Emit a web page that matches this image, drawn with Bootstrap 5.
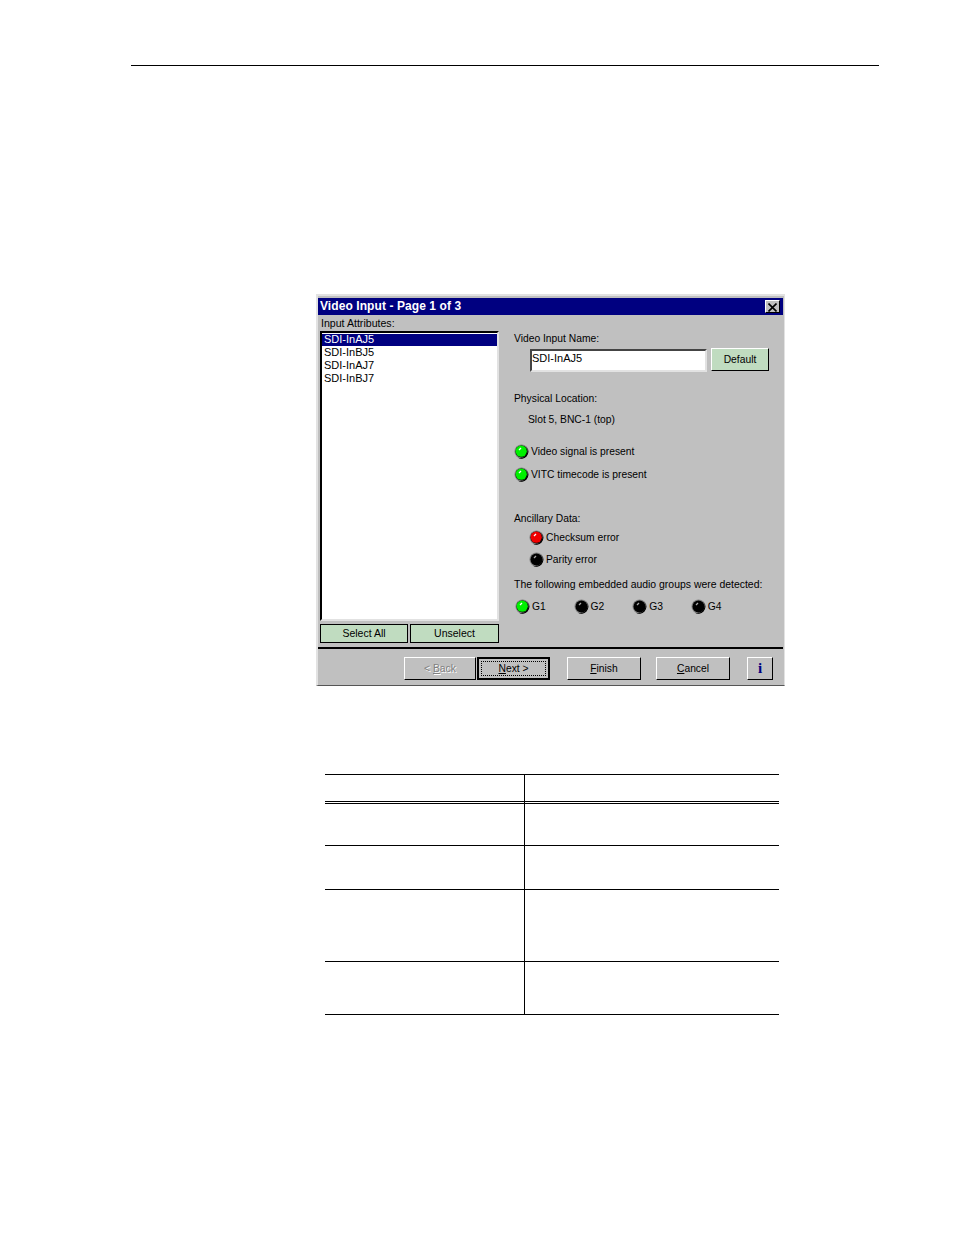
<!DOCTYPE html>
<html lang="en">
<head>
<meta charset="utf-8">
<title>Video Input</title>
<link href="https://cdn.jsdelivr.net/npm/bootstrap@5.3.0/dist/css/bootstrap.min.css" rel="stylesheet">
<style>
html,body{background:#fff;margin:0}
body{font-family:"Liberation Sans",Arial,sans-serif;font-size:11px;line-height:13px;color:#000;height:1235px;overflow:hidden}
.sheet{padding:65px 75px 0 131px}
.head-rule{height:1px;background:#000;margin-bottom:228px}
.dlg{box-sizing:border-box;width:469px;height:392px;margin-left:185px;background:#c0c0c0;border-style:solid;border-width:2px 1px 1px 2px;border-color:#e2e2e2 #e2e2e2 #555 #e2e2e2;padding-top:2px}
.ttl{height:17px;width:465px;background:#000080;color:#fff;font-weight:700;font-size:12px;letter-spacing:.08px;padding:0 3px 0 2px}
.xbtn{width:15px;height:13px;background:#c0c0c0;border:1px solid;border-color:#fff #000 #000 #fff;padding:0;line-height:0}
.xbtn svg{display:block;margin:1px 0 0 2px}
.panes{height:332px}
.leftp{width:180px;margin-left:2px}
.lbl{margin:2px 0 1px 1px;height:13px;white-space:nowrap;font-size:10.6px}
.lbox{width:179px;height:290px;background:#fff;border:2px solid;border-color:#000 #e2e2e2 #e2e2e2 #000;border-radius:0;padding:1px 0 0}
.lbox .list-group-item{border:0;border-radius:0;padding:0 0 0 2px;height:12px;margin-bottom:1px;line-height:11px;font-size:11px;background:transparent;color:#000}
.lbox .list-group-item.active{background:#000080;color:#fff}
.duo{margin-top:3px;gap:2px}
.gbtn{background:#c0dcc0;border:1px solid #000;border-radius:0;font-size:10.5px;line-height:13px;color:#000;padding:0;height:19px}
.gbtn.one{width:88px}.gbtn.two{width:89px}
.rightp{margin-left:14px;width:260px;font-size:10.3px}
.vname{margin-top:17px;height:13px}
.namerow{margin-top:3px;margin-left:16px;gap:4px;height:23px}
.nameinp{box-sizing:border-box;width:177px;height:23px;margin-top:1px;border:2px solid;border-color:#444 #e2e2e2 #e2e2e2 #444;background:#fff;padding:0 0 6px 0;font-size:11px;line-height:13px;border-radius:0;color:#000;box-shadow:none}
.defbtn{box-sizing:border-box;width:58px;height:23px;background:#c0dcc0;border:1px solid;border-color:#fff #000 #000 #fff;border-radius:0;font-size:10.3px;line-height:13px;color:#000;padding:0}
.loc1{margin-top:21px}
.loc2{margin-top:8px;margin-left:14px}
.led{flex:none;display:block}
.ledrow{gap:2px;height:15px;align-items:center}
.r1{margin-top:18px}.r2{margin-top:8px}
.anc{margin-top:30px}
.sub{margin-left:15px}
.r3{margin-top:5px}.r4{margin-top:7px}
.det{margin-top:11px;white-space:nowrap;font-size:10.45px}
.grow{margin-top:8px;margin-left:1px;width:240px}
.gcell{width:58.6px}
.gcell .lt{margin-left:2px}
.rule2{height:2px;background:#000;width:465px;margin-top:0}
.foot{width:465px;height:37px;padding-top:8px;padding-left:86px}
.wbtn{box-sizing:border-box;height:23px;width:74px;background:#c0c0c0;border:1px solid;border-color:#fff #000 #000 #fff;border-radius:0;font-size:10.3px;line-height:13px;color:#000;padding:0}
.wbtn.dis,.wbtn.dis:disabled{opacity:1;color:#808080;text-shadow:1px 1px 0 #fff;width:72px;background:#c0c0c0;border-color:#fff #000 #000 #fff}
.wbtn.foc{border:2px solid #000;width:73px;margin-left:1px;padding:2px}
.wbtn.foc span{display:block;border:1px dotted #000;height:15px;line-height:13px}
.wbtn.fin{margin-left:17px}
.wbtn.can{margin-left:15px}
.wbtn.inf{width:26px;margin-left:17px;color:#000080;font-family:"Liberation Serif",serif;font-weight:700;font-size:15px}
.ptab{width:454px;margin:88px 0 0 194px;border-collapse:collapse;table-layout:fixed}
.ptab td,.ptab th{padding:0;border:0;border-bottom:1px solid #000;background:#fff}
.ptab tr:first-child td{border-top:1px solid #000}
.ptab td:first-child{width:199px;border-right:1px solid #000}
.h0{height:27px}.h1{height:42px}.h2{height:44px}.h3{height:72px}.h4{height:53px}
.ptab .rh{height:2px;line-height:0;font-size:0}
</style>
</head>
<body>
<svg width="0" height="0" class="position-absolute">
<defs>
<g id="ledbase">
<circle cx="7.5" cy="7.5" r="7" fill="#808080"/>
<path d="M13 3.5A7 7 0 0 1 3.5 13.5 7.5 7.5 0 0 0 13 3.5Z" fill="#000"/>
<circle cx="7.5" cy="7.5" r="6" fill="#000"/>
</g>
<symbol id="lg" viewBox="0 0 15 15"><use href="#ledbase"/><circle cx="7.2" cy="7.2" r="5.6" fill="#00f000"/><path d="M5 6l2-2" stroke="#fff" stroke-width="1.2"/></symbol>
<symbol id="lr" viewBox="0 0 15 15"><use href="#ledbase"/><circle cx="7.2" cy="7.2" r="5.6" fill="#f00000"/><path d="M5 6l2-2" stroke="#fff" stroke-width="1.2"/></symbol>
<symbol id="lk" viewBox="0 0 15 15"><use href="#ledbase"/><path d="M5 6l2-2" stroke="#aaa" stroke-width="1.2"/></symbol>
</defs>
</svg>
<div class="sheet">
<div class="head-rule"></div>
<div class="dlg">
<div class="ttl d-flex align-items-center justify-content-between">
<span>Video Input - Page 1 of 3</span>
<button type="button" class="xbtn" aria-label="Close"><svg width="9" height="9" viewBox="0 0 9 9"><path d="M0.5 0.5l8 8M8.5 0.5l-8 8" stroke="#000" stroke-width="1.6"/></svg></button>
</div>
<div class="panes d-flex">
<div class="leftp">
<div class="lbl">Input Attributes:</div>
<div class="lbox list-group">
<div class="list-group-item active">SDI-InAJ5</div>
<div class="list-group-item">SDI-InBJ5</div>
<div class="list-group-item">SDI-InAJ7</div>
<div class="list-group-item">SDI-InBJ7</div>
</div>
<div class="duo d-flex">
<button type="button" class="btn gbtn one">Select All</button>
<button type="button" class="btn gbtn two">Unselect</button>
</div>
</div>
<div class="rightp">
<div class="vname">Video Input Name:</div>
<div class="namerow d-flex">
<input class="form-control nameinp" type="text" value="SDI-InAJ5" aria-label="Video Input Name">
<button type="button" class="btn defbtn">Default</button>
</div>
<div class="loc1">Physical Location:</div>
<div class="loc2">Slot 5, BNC-1 (top)</div>
<div class="d-flex ledrow r1"><svg class="led" width="15" height="15"><use href="#lg"/></svg><span>Video signal is present</span></div>
<div class="d-flex ledrow r2"><svg class="led" width="15" height="15"><use href="#lg"/></svg><span>VITC timecode is present</span></div>
<div class="anc">Ancillary Data:</div>
<div class="d-flex ledrow r3 sub"><svg class="led" width="15" height="15"><use href="#lr"/></svg><span>Checksum error</span></div>
<div class="d-flex ledrow r4 sub"><svg class="led" width="15" height="15"><use href="#lk"/></svg><span>Parity error</span></div>
<div class="det">The following embedded audio groups were detected:</div>
<div class="grow d-flex">
<div class="gcell d-flex align-items-center"><svg class="led" width="15" height="15"><use href="#lg"/></svg><span class="lt">G1</span></div>
<div class="gcell d-flex align-items-center"><svg class="led" width="15" height="15"><use href="#lk"/></svg><span class="lt">G2</span></div>
<div class="gcell d-flex align-items-center"><svg class="led" width="15" height="15"><use href="#lk"/></svg><span class="lt">G3</span></div>
<div class="gcell d-flex align-items-center"><svg class="led" width="15" height="15"><use href="#lk"/></svg><span class="lt">G4</span></div>
</div>
</div>
</div>
<div class="rule2"></div>
<div class="foot d-flex">
<button type="button" class="btn wbtn dis" disabled>&lt; <u>B</u>ack</button>
<button type="button" class="btn wbtn foc"><span><u>N</u>ext &gt;</span></button>
<button type="button" class="btn wbtn fin"><u>F</u>inish</button>
<button type="button" class="btn wbtn can"><u>C</u>ancel</button>
<button type="button" class="btn wbtn inf">i</button>
</div>
</div>
<table class="ptab">
<tbody>
<tr><td class="h0"></td><td></td></tr>
<tr><td class="rh"></td><td></td></tr>
<tr><td class="h1"></td><td></td></tr>
<tr><td class="h2"></td><td></td></tr>
<tr><td class="h3"></td><td></td></tr>
<tr><td class="h4"></td><td></td></tr>
</tbody>
</table>
</div>
<script src="https://cdn.jsdelivr.net/npm/bootstrap@5.3.0/dist/js/bootstrap.bundle.min.js"></script>
</body>
</html>
